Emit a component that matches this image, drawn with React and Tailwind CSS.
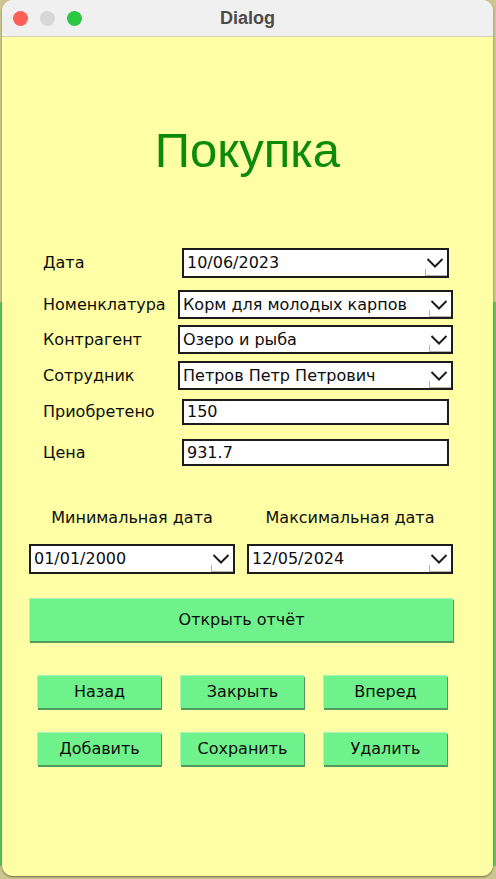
const body = "font-['DejaVu_Sans',sans-serif]";

const Chevron = () => (
  <>
    <div className="absolute bottom-0 right-0 w-[22px] h-[7px] border-l border-b border-[#b5b5b5]" />
    <svg className="absolute right-[3px] top-1/2 -translate-y-1/2" width="18" height="11" viewBox="0 0 18 11">
      <polyline points="1.5,1.5 9,9 16.5,1.5" fill="none" stroke="#1e1e1e" strokeWidth="2" />
    </svg>
  </>
);

const Combo = ({ value, className }) => (
  <div className={`relative flex items-center bg-white border-2 border-[#1c1c1c] ${className}`}>
    <span className="pl-[3px] text-[16px] leading-5 text-[#0d0d0d]">{value}</span>
    <Chevron />
  </div>
);

const Field = ({ value, className }) => (
  <div className={`flex items-center bg-white border-2 border-[#1c1c1c] ${className}`}>
    <span className="pl-[3px] text-[16px] leading-5 text-[#0d0d0d]">{value}</span>
  </div>
);

const Row = ({ label, className, children }) => (
  <div className={`flex items-center ${className}`}>
    <div className="w-[135px] pl-[41px] shrink-0 text-[16px] leading-5 text-[#0d0d0d] whitespace-nowrap">{label}</div>
    {children}
  </div>
);

const Btn = ({ children, className }) => (
  <button className={`flex items-center justify-center bg-[#6ff28b] border-t border-l border-[#a6f5b6] shadow-[1px_2px_0_#4f9a5c] text-[16px] leading-5 text-[#0d0d0d] ${className}`}>
    {children}
  </button>
);

export default function App() {
  return (
    <div className="w-[496px] h-[879px] overflow-hidden bg-[linear-gradient(to_bottom,#cbc58f_0,#cbc58f_302px,#5dc06c_302px,#5dc06c_866px,#cbc58f_866px)]">
      <div className={`ml-[2px] w-[491px] h-[876px] rounded-[11px] overflow-hidden bg-[#ffffa6] shadow-[0_1px_2px_rgba(0,0,0,0.45)] ${body}`}>
        {/* title bar */}
        <div className="relative h-[37px] bg-[#f0f0f0] border-b border-[#d8d5ae] flex items-center pl-[11px] gap-[12px]">
          <span className="w-[15px] h-[15px] rounded-full bg-[#fe5f57]" />
          <span className="w-[15px] h-[15px] rounded-full bg-[#d7d7d7]" />
          <span className="w-[15px] h-[15px] rounded-full bg-[#28c840]" />
          <div className="absolute inset-0 flex items-center justify-center font-['Liberation_Sans',sans-serif] font-bold text-[18px] text-[#4b4b4b]">
            Dialog
          </div>
        </div>

        <h1 className="mt-[89px] text-center font-['Liberation_Sans',sans-serif] text-[49px] leading-none text-[#0b8a0b]">
          Покупка
        </h1>

        <Row label="Дата" className="mt-[73px] h-[30px]">
          <Combo value="10/06/2023" className="ml-[45px] w-[267px] h-[30px]" />
        </Row>
        <Row label="Номенклатура" className="mt-[12px] h-[29px]">
          <Combo value="Корм для молодых карпов" className="ml-[41px] w-[275px] h-[29px]" />
        </Row>
        <Row label="Контрагент" className="mt-[6px] h-[29px]">
          <Combo value="Озеро и рыба" className="ml-[41px] w-[275px] h-[29px]" />
        </Row>
        <Row label="Сотрудник" className="mt-[7px] h-[29px]">
          <Combo value="Петров Петр Петрович" className="ml-[41px] w-[275px] h-[29px]" />
        </Row>
        <Row label="Приобретено" className="mt-[9px] h-[26px]">
          <Field value="150" className="ml-[45px] w-[267px] h-[26px]" />
        </Row>
        <Row label="Цена" className="mt-[14px] h-[27px]">
          <Field value="931.7" className="ml-[45px] w-[267px] h-[27px]" />
        </Row>

        <div className="mt-[42px] pl-[27px] flex gap-[12px]">
          <div className="w-[206px] flex flex-col items-center">
            <div className="text-[16px] leading-5 text-[#0d0d0d]">Минимальная дата</div>
            <Combo value="01/01/2000" className="mt-[16px] w-[206px] h-[30px]" />
          </div>
          <div className="w-[206px] flex flex-col items-center">
            <div className="text-[16px] leading-5 text-[#0d0d0d]">Максимальная дата</div>
            <Combo value="12/05/2024" className="mt-[16px] w-[206px] h-[30px]" />
          </div>
        </div>

        <div className="mt-[24px] pl-[27px]">
          <Btn className="w-[424px] h-[43px]">Открыть отчёт</Btn>
        </div>

        <div className="mt-[34px] pl-[35px] flex gap-[19px]">
          <Btn className="w-[124px] h-[33px]">Назад</Btn>
          <Btn className="w-[124px] h-[33px]">Закрыть</Btn>
          <Btn className="w-[124px] h-[33px]">Вперед</Btn>
        </div>
        <div className="mt-[24px] pl-[35px] flex gap-[19px]">
          <Btn className="w-[124px] h-[33px]">Добавить</Btn>
          <Btn className="w-[124px] h-[33px]">Сохранить</Btn>
          <Btn className="w-[124px] h-[33px]">Удалить</Btn>
        </div>
      </div>
    </div>
  );
}
